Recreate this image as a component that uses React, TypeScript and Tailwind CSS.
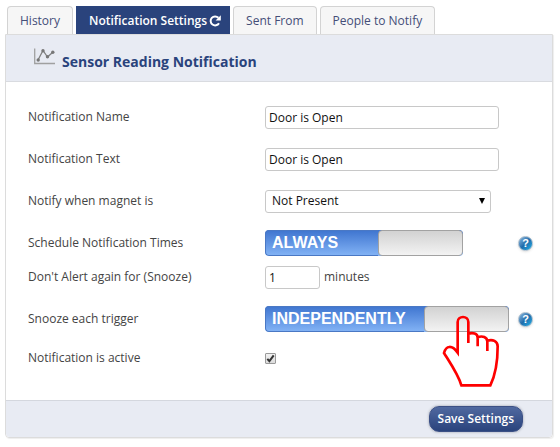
import { useState } from "react";
import type { ReactNode } from "react";
import clsx from "clsx";

const tabs = ["History", "Notification Settings", "Sent From", "People to Notify"];

const RefreshIcon = () => (
  <svg viewBox="0 0 12 12" className="h-3 w-3" aria-hidden="true">
    <path d="M10 8.2A4.5 4.5 0 1 1 9.4 2.8" fill="none" stroke="currentColor" strokeWidth="2" />
    <path d="M11.8 0.2V5.4H6.6Z" fill="currentColor" />
  </svg>
);

const ChartIcon = () => (
  <svg viewBox="0 0 22 17" className="h-[17px] w-[22px]" aria-hidden="true">
    <path d="M0.7 0.5V15.5H21" fill="none" stroke="#a0a0a0" strokeWidth="1.3" />
    <path d="M4 12L9 2.5L13.5 9L19 4" fill="none" stroke="#808080" strokeWidth="1.3" />
    <g fill="#777777">
      <circle cx="4.2" cy="12" r="1.7" />
      <circle cx="9" cy="2.8" r="1.7" />
      <circle cx="13.5" cy="8.8" r="1.7" />
      <circle cx="18.8" cy="4.2" r="1.7" />
    </g>
  </svg>
);

const HandIcon = () => (
  <svg viewBox="36 56 177 222" className="h-[74px] w-[59px]" aria-hidden="true">
    <path
      d="M83 113H116C128 111 143 114 143 127C158 120 171 126 172 137C188 131 203 137 203 153C203 196 198 236 181 270H94C88 236 62 205 42 173C48 150 66 148 83 172Z"
      fill="#ffffff"
    />
    <path
      d="M91 270H94C86 240 62 205 42 173C48 150 66 148 83 172V80C83 60 115 60 115 80V143M115 115C128 111 143 114 143 127V153M143 126C158 120 171 126 172 138V167M172 136C188 131 203 137 203 153C203 196 198 236 181 270H91"
      fill="none"
      stroke="#fe0000"
      strokeWidth="8"
    />
  </svg>
);

const Help = ({ topic }: { topic: string }) => (
  <button
    type="button"
    aria-label={`Help: ${topic}`}
    className="ml-auto flex h-[15px] w-[15px] items-center justify-center rounded-full border border-[#a9bccb] bg-linear-to-br from-[#8fbce0] via-[#1f6cab] to-[#20b4ec] font-['Liberation_Sans',sans-serif] text-[11px] leading-none font-bold text-white shadow"
  >
    ?
  </button>
);

const Toggle = ({ id, text, className }: { id: string; text: string; className: string }) => {
  const [on, setOn] = useState(true);
  return (
    <button
      id={id}
      type="button"
      role="switch"
      aria-checked={on}
      onClick={() => setOn(!on)}
      className={clsx(
        "flex h-[26px] overflow-hidden rounded-[4px] bg-linear-to-b from-[#3e74cf] to-[#84b4f6]",
        !on && "flex-row-reverse",
        className
      )}
    >
      <span className="flex h-full flex-1 items-center rounded-l-[4px] border border-r-0 border-[#4a78c4] pl-1.5 font-['Liberation_Sans',sans-serif] text-[16px] leading-none font-bold text-white">
        {text}
      </span>
      <span className="h-full w-[85px] rounded-[4px] border border-[#a2a2a2] bg-linear-to-b from-[#d2d2d2] to-[#f3f3f3]" />
    </button>
  );
};

const Row = ({
  id,
  label,
  className = "h-[42px]",
  children,
}: {
  id: string;
  label: string;
  className?: string;
  children: ReactNode;
}) => (
  <div className={clsx("grid grid-cols-[237px_1fr] items-center", className)}>
    <label htmlFor={id}>{label}</label>
    <div className="flex items-center">{children}</div>
  </div>
);

const field = "h-[23px] rounded-[3px] border border-[#c8c8c8] bg-white px-[3px] text-[12px] text-[#111111]";

export default function App() {
  const [active, setActive] = useState("Notification Settings");

  return (
    <main className="bg-white pt-1.5 pr-[7px] pb-2 pl-[5px] font-['Open_Sans',sans-serif] text-[12px] leading-4 text-[#444444]">
      <nav className="flex gap-[3px] pl-0.5">
        {tabs.map((tab) => (
          <button
            key={tab}
            type="button"
            onClick={() => setActive(tab)}
            className={clsx(
              "flex h-7 items-center gap-0.5 border border-b-0",
              active === tab
                ? "border-[#2a437c] bg-[#2a437c] pr-2 pl-3 font-semibold text-white"
                : "rounded-t-[4px] border-[#d3d3d3] bg-[#f6f6f6] px-3 text-[#444e78]"
            )}
          >
            {tab}
            {active === tab && <RefreshIcon />}
          </button>
        ))}
      </nav>

      <form
        className="rounded-b-[4px] border border-[#dcdcdc] shadow-[1px_1px_1px_#eeeeee]"
        onSubmit={(e) => e.preventDefault()}
      >
        <header className="flex h-[47px] items-center gap-1.5 border-b border-[#d9dbe0] bg-[#e8ebf3] pl-7">
          <span className="pb-1">
            <ChartIcon />
          </span>
          <h1 className="pt-2 text-[14px] leading-5 font-bold text-[#2a437c]">Sensor Reading Notification</h1>
        </header>

        <div className="pt-3.5 pr-[19px] pb-6 pl-[22px]">
          <Row id="name" label="Notification Name">
            <input id="name" type="text" defaultValue="Door is Open" className={clsx(field, "w-[234px]")} />
          </Row>
          <Row id="text" label="Notification Text">
            <input id="text" type="text" defaultValue="Door is Open" className={clsx(field, "w-[234px]")} />
          </Row>
          <Row id="magnet" label="Notify when magnet is">
            <div className="relative">
              <select
                id="magnet"
                className="h-[23px] w-[226px] appearance-none rounded-[3px] border border-[#c8c8c8] bg-white pl-1.5 text-[12px] text-[#111111]"
              >
                <option>Not Present</option>
                <option>Present</option>
              </select>
              <svg viewBox="0 0 6 6" className="pointer-events-none absolute top-2 right-1.5 h-1.5 w-1.5" aria-hidden="true">
                <path d="M0 0H6L3 6Z" fill="#000000" />
              </svg>
            </div>
          </Row>
          <Row id="schedule" label="Schedule Notification Times">
            <Toggle id="schedule" text="ALWAYS" className="w-[198px]" />
            <Help topic="Schedule Notification Times" />
          </Row>
          <Row id="snooze" label="Don't Alert again for (Snooze)" className="h-[26px]">
            <input id="snooze" type="text" defaultValue="1" className={clsx(field, "mr-1 w-[55px]")} />
            minutes
          </Row>
          <Row id="trigger" label="Snooze each trigger" className="mt-2 h-[42px]">
            <div className="relative">
              <Toggle id="trigger" text="INDEPENDENTLY" className="w-[244px]" />
              <div className="pointer-events-none absolute top-2 right-2">
                <HandIcon />
              </div>
            </div>
            <Help topic="Snooze each trigger" />
          </Row>
          <Row id="active" label="Notification is active" className="h-9">
            <div className="relative">
              <input
                id="active"
                type="checkbox"
                defaultChecked
                className="peer block h-[11px] w-[11px] appearance-none rounded-[1px] border border-[#9a9a9a] bg-linear-to-b from-[#f2f2f2] to-[#dcdcdc]"
              />
              <svg
                viewBox="0 0 11 11"
                className="pointer-events-none absolute inset-0 hidden h-[11px] w-[11px] peer-checked:block"
                aria-hidden="true"
              >
                <path d="M2.3 5.8L4.4 8.2L8.7 2.4" fill="none" stroke="#333333" strokeWidth="2" />
              </svg>
            </div>
          </Row>
        </div>

        <footer className="flex h-[37px] items-center justify-end rounded-b-[4px] border-t border-[#d4d7de] bg-[#e8ebf3] pr-[29px]">
          <button
            type="submit"
            className="h-[26px] rounded-[10px] border border-[#3c5085] bg-linear-to-b from-[#5069a0] to-[#2a437c] px-2 font-semibold text-white shadow-[0_0_2px_1px_#c4c8d2]"
          >
            Save Settings
          </button>
        </footer>
      </form>
    </main>
  );
}
